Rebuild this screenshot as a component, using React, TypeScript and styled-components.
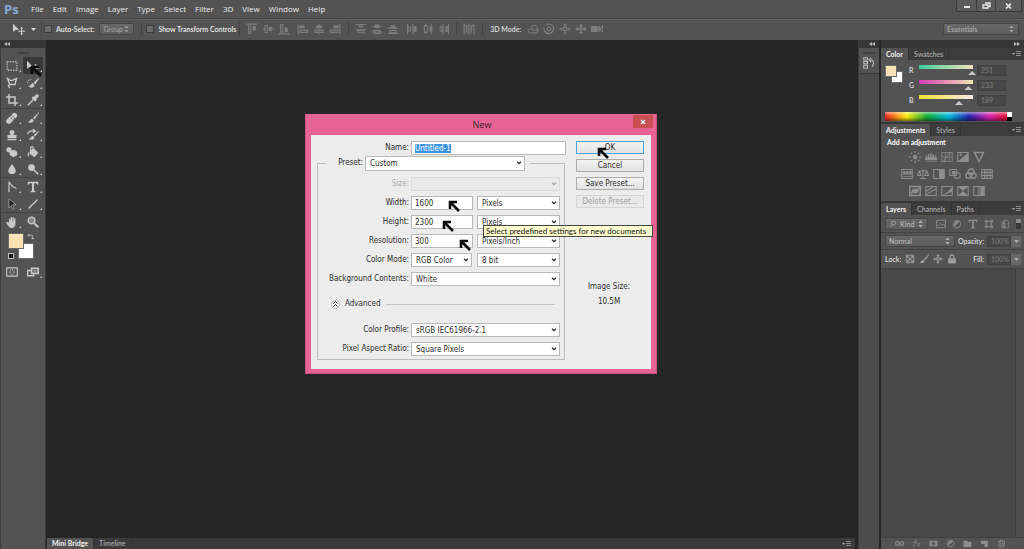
import React from "react";
import styled, { createGlobalStyle, css } from "styled-components";

const Global = createGlobalStyle`
  *, *::before, *::after { box-sizing: border-box; }
  html, body, #root { height: 100%; margin: 0; }
  body {
    background: #262626;
    font-family: Lato, "Open Sans", sans-serif;
    font-size: 7px;
    line-height: 12px;
    color: #dcdcdc;
    overflow: hidden;
  }
  button, input, select { font: inherit; color: inherit; margin: 0; padding: 0; border: 0; border-radius: 0; outline: 0; background: none; }
  select { appearance: none; opacity: 1; }
  fieldset { margin: 0; padding: 0; border: 0; min-width: 0; }
  svg { display: block; flex: none; }
`;

/* ---------- icons ---------- */

const Svg = ({ s = 12, children }: { s?: number; children: React.ReactNode }) => (
  <svg width={s} height={s} viewBox="0 0 16 16" fill="none" stroke="currentColor" strokeWidth={1.4} aria-hidden="true">
    {children}
  </svg>
);
const F = { fill: "currentColor", stroke: "none" };

const icons: Record<string, React.ReactNode> = {
  marquee: <rect x="1.5" y="2.5" width="13" height="11" strokeDasharray="2 1.4" />,
  move: (
    <>
      <path {...F} d="M0 1v11l3-2.600L8 9z" />
      <path d="M11.500 6.500v9M7 11h9" />
      <path {...F} d="M11.500 5l2 2.500h-4zM11.500 16l2-2h-4z" />
    </>
  ),
  lasso: <path strokeWidth="1.800" d="M2 2l5 3 7-3-2 8H5L2 2zM5 10l-2 2 2 3" />,
  quick: (
    <>
      <path {...F} d="M16 1L9 7l2 3 5-8zM8 8c-3 0-2 4-6 4 3 4 8 2 8-1z" />
      <path strokeDasharray="1.500 1.500" d="M1 8c0-4 3-5 6-4" />
    </>
  ),
  crop: <path strokeWidth="2" d="M4 0v12h12M0 4h12v12" />,
  dropper: (
    <>
      <path {...F} d="M9 4l3-3c2-2 5 1 3 3l-3 3 1 1-2 2-5-5 2-2z" />
      <path strokeWidth="2" d="M9 7l-6 6-2 2" />
    </>
  ),
  heal: (
    <>
      <path {...F} d="M1 10l8-8c3-3 8 2 5 5l-8 8c-3 3-8-2-5-5z" />
      <path stroke="#535353" strokeDasharray="1.400 1.400" d="M5 6l5 5M7 4l5 5" />
    </>
  ),
  brush: <path {...F} d="M16 0L8 8l2 2 6-9zM7 9c-3 0-2 4-6 4 3 3 8 1 8-2z" />,
  stamp: <path {...F} d="M6 8c0-2-2-3-1-5s5-2 6 0-1 3-1 5h4v4H2V8zM2 13h12v2H2z" />,
  history: (
    <>
      <path {...F} d="M16 2L9 8l2 2 5-7zM8 9c-3 0-2 4-6 4 3 3 8 1 8-2z" />
      <path strokeWidth="1.800" d="M1 7c1-4 5-5 9-4M8 0l3 3-3 2" />
    </>
  ),
  eraser: (
    <>
      <path {...F} d="M5 7l6-2 4 3v4l-5 3-5-3z" />
      <circle {...F} cx="4" cy="5" r="3.500" />
    </>
  ),
  bucket: (
    <>
      <path {...F} d="M4 6l5-3 6 6-5 6-7-5zM2 8c-3 5 0 7 1 5z" />
      <path d="M5 8V1h3v4" />
    </>
  ),
  drop: <path {...F} d="M8 1C6 5 3 7 3 11c0 5 10 5 10 0 0-4-3-6-5-10z" />,
  dodge: (
    <>
      <circle {...F} cx="6" cy="6" r="4.500" />
      <path strokeWidth="2" d="M9 9l6 6" />
    </>
  ),
  pen: <path strokeWidth="1.600" d="M4 15V1c2 4 5 7 10 9" />,
  type: <path {...F} d="M1 1h14v4h-1.500l-1-2H9.400v10l1.800.7V15H4.800v-1.300l1.800-.7V3H3.500l-1 2H1z" />,
  select: <path fill="#1c1c1c" stroke="currentColor" strokeWidth=".8" d="M4 1v12l3-3 2 5 2-1-2-5h4z" />,
  line: <path strokeWidth="1.600" d="M2 14L14 2" />,
  hand: <path {...F} d="M4 9V4c0-1 1.500-1 1.700 0l.5 3V2c0-1 1.700-1 1.800 0v5h.6V2c0-1 1.700-1 1.700 0v5.500l.7-4c.2-1 1.600-1 1.600 0V10c0 4-2 6-5 6s-4-2-7.500-7c0-1 2-1.500 3.900 0z" />,
  zoom: (
    <>
      <circle fill="#8a8a8a" strokeWidth="1.800" cx="6" cy="6" r="4.500" />
      <path strokeWidth="2.600" d="M9.500 9.500L15 15" />
    </>
  ),
  mask: (
    <>
      <path d="M1 2.500h14v11H1z" />
      <circle cx="8" cy="8" r="3" strokeDasharray="1.500 1" />
    </>
  ),
  screens: (
    <>
      <path strokeWidth="1.800" d="M1 6h8v7H1z" />
      <path {...F} d="M5 2h11v9H5z" />
      <path stroke="#535353" d="M8 5h5v3H8z" />
    </>
  ),
  swap: <path strokeWidth="2" d="M2 5h8c2 0 3 1 3 3v6M5 2L2 5l3 3M10 11l3 3 3-3" />,
  alignTop: (
    <>
      <path d="M1 1.500h14M3.500 4h3v10h-3z" />
      <path {...F} d="M9 4h4v6H9z" />
    </>
  ),
  alignMidV: (
    <>
      <path d="M1 8h3M7 8h2M12 8h3M4 3.500h3v9H4z" />
      <path {...F} d="M9 5h4v6H9z" />
    </>
  ),
  alignBot: (
    <>
      <path d="M1 14.500h14M3.500 2h3v10h-3z" />
      <path {...F} d="M9 6h4v6H9z" />
    </>
  ),
  alignLeft: (
    <>
      <path d="M1.500 1v14M4 9.500h10v3H4z" />
      <path {...F} d="M3 3h7v4H3z" />
    </>
  ),
  alignMidH: (
    <>
      <path d="M8 1v14M2.500 9.500h11v3h-11z" />
      <path {...F} d="M4 3h8v4H4z" />
    </>
  ),
  alignRight: (
    <>
      <path d="M14.500 1v14M2 9.500h10v3H2z" />
      <path {...F} d="M6 3h7v4H6z" />
    </>
  ),
  distTop: (
    <>
      <path d="M1 2h14M1 9h14M4 10h8v3H4z" />
      <path {...F} d="M5 3h6v3H5z" />
    </>
  ),
  distMid: (
    <>
      <path d="M1 5h14M1 12h14M4 10h8v4H4z" />
      <path {...F} d="M5 2h6v5H5z" />
    </>
  ),
  distBot: (
    <>
      <path d="M1 7h14M1 14h14M4 10h8v3H4z" />
      <path {...F} d="M5 3h6v4H5z" />
    </>
  ),
  distLeft: (
    <>
      <path d="M2 1v14M9 1v14M3 5h3v6H3z" />
      <path {...F} d="M10 4h4v8h-4z" />
    </>
  ),
  distCen: (
    <>
      <path d="M5 1v2M5 13v2M12 1v14M3 3.500h4v9H3z" />
      <path {...F} d="M10 5h4v6h-4z" />
    </>
  ),
  distRight: (
    <>
      <path d="M7 1v14M14 1v14M3 5h3v6H3z" />
      <path {...F} d="M10 4h3v8h-3z" />
    </>
  ),
  auto: <path strokeWidth="1.600" d="M1.500 1v14M5 3v11M8 1v14M11 3v11M14.500 1v14M2 3.500h3M11 3.500h3" />,
  orbit: <path d="M13 5c-3-4-9-1-6 3 2 3 6 2 7-1 2 4-2 7-5 6-4 1-8 0-7-3 0-2 3-2 4-1" />,
  roll: (
    <>
      <path d="M4 3c5-4 11 0 10 6-2 6-10 7-12 1l-1-4" />
      <circle cx="8" cy="8" r="2.500" />
    </>
  ),
  pan: (
    <>
      <path {...F} d="M8 0L5.500 3.500h5zM8 16l-2.500-3.500h5zM0 8l3.500-2.500v5zM16 8l-3.500-2.500v5z" />
      <path d="M8 3v3M8 10v3M3 8h3M10 8h3M6 6h4v4H6z" />
    </>
  ),
  slide: <path {...F} d="M8 1l3 3-2 1v2h3V5l4 3-4 3V9H9v3h2l-3 3-3-3h2V9H4v2L0 8l4-3v2h3V5L5 4z" />,
  camera: (
    <>
      <path {...F} d="M0 4h9v8H0z" />
      <path d="M9 8l2-3v6zM12 8l3.500-4v8z" />
    </>
  ),
  panelHistory: <path d="M1 1h5v3H1zM1 6h5v3H1zM1 11h5v4H1zM9 4h3c3 2 2 6 0 9M11 1L8 4l3 3" />,
  sun: (
    <>
      <circle {...F} cx="8" cy="8" r="3" />
      <path d="M8 0v3M8 13v3M0 8h3M13 8h3M2.500 2.500l2 2M11.500 11.500l2 2M13.500 2.500l-2 2M4.500 11.500l-2 2" />
    </>
  ),
  levels: <path {...F} d="M0 12V9h1V6h2v3h1V4h2v4h1V3h2v5h1V5h2v4h1V6h2v3h1v3zM0 13h16v1H0z" />,
  curves: <path d="M1 2h14v12H1zM1 14C8 13 7 3 15 2M6 2v12M11 2v12M1 8h14" strokeWidth="1" />,
  exposure: (
    <>
      <path d="M1 2h14v12H1z" />
      <path {...F} d="M1 14L15 2v12z" />
      <path d="M3 5h4M5 3v4" />
    </>
  ),
  vibrance: <path strokeWidth="2" d="M2 2h12L8 14z" />,
  hue: (
    <>
      <path d="M1 2h14v12H1z" />
      <path {...F} d="M3 4h3v5H3zM7 4h3v5H7zM11 4h3v5h-3zM3 11h11v1H3z" />
    </>
  ),
  balance: <path d="M8 1v13M4 14h8M2 4h12M3 4l-2.500 6h5zM13 4l-2.500 6h5z" />,
  bw: (
    <>
      <path d="M1 2h14v12H1z" />
      <path {...F} d="M8 2h7v12H8z" />
    </>
  ),
  photo: (
    <>
      <path d="M1 2h9v8H1z" />
      <circle cx="11" cy="10" r="4" />
      <circle {...F} cx="6" cy="6" r="2.500" />
    </>
  ),
  mixer: (
    <>
      <circle cx="8" cy="5" r="3.800" strokeWidth="2" />
      <circle cx="5" cy="10" r="3.800" strokeWidth="2" />
      <circle cx="11" cy="10" r="3.800" strokeWidth="2" />
    </>
  ),
  lookup: <path d="M1 2h14v12H1zM1 6h14M1 10h14M5 2v12M8 2v12M12 2v12" />,
  invert: (
    <>
      <path strokeWidth="2" d="M1 2h14v12H1z" />
      <path {...F} d="M1 14l4-9h6L15 2l-4 9H5z" />
    </>
  ),
  poster: <path d="M1 2h14v12H1zM1 13l14-8M1 9l9-6" />,
  threshold: (
    <>
      <path d="M1 2h14v12H1z" />
      <path {...F} d="M1 14l7-4 7-7v6l-7 3z" />
    </>
  ),
  selective: (
    <>
      <path d="M1 2h14v12H1z" />
      <path {...F} d="M1 2l7 6 7-6zM1 14l7-6 7 6z" />
    </>
  ),
  gradMap: (
    <>
      <path d="M1 2h14v12H1z" />
      <path {...F} opacity=".5" d="M6 2h4v12H6z" />
      <path {...F} d="M10 2h5v12h-5z" />
    </>
  ),
  image: <path d="M1 2h14v12H1zM3 11l4-4 3 3 2-2 2 3" />,
  half: (
    <>
      <circle cx="8" cy="8" r="6" />
      <path {...F} d="M4 12A6 6 0 0 1 12 4z" />
    </>
  ),
  shape: <path d="M4 4h8v8H4zM2 2h3v3H2zM11 2h3v3h-3zM2 11h3v3H2zM11 11h3v3h-3z" />,
  smart: <path d="M6 2h5l3 3v9H6zM3 6h5v8H3z" />,
  pixels: (
    <>
      <path d="M2 2h12v12H2z" />
      <path {...F} d="M3 3h3v3H3zM10 3h3v3h-3zM6 6h4v4H6zM3 10h3v3H3zM10 10h3v3h-3z" />
    </>
  ),
  lock: (
    <>
      <path {...F} d="M2 7h12v8H2z" />
      <path strokeWidth="2" d="M5 7V3c1-2 5-2 6 0v4" />
    </>
  ),
  link: <path strokeWidth="2" d="M8 8C5 3 1 4 1 8s4 5 7 0 7-4 7 0-4 5-7 0" />,
  fx: <path d="M9 2C6 0 6 5 5 9s-2 6-4 4M3 6h6M9 7l5 6M14 7l-5 6" />,
  addMask: <path {...F} fillRule="evenodd" d="M1 3h14v10H1zM11 8a3 3 0 1 0-6 0 3 3 0 0 0 6 0z" />,
  folder: <path {...F} d="M1 3h6l1 2h7v9H1z" />,
  page: <path {...F} d="M2 3h12v11H8V9H2z" />,
  trash: <path d="M2 4h12M6 4V2h4v2M3 4l1 10h8l1-10M6 6v6M10 6v6" />,
  search: (
    <>
      <circle cx="9" cy="6" r="4" />
      <path d="M6 9l-4 5" />
    </>
  ),
};

const Icon = ({ name, s }: { name: string; s?: number }) => <Svg s={s}>{icons[name]}</Svg>;

const Pointer = () => (
  <svg width="13" height="13" viewBox="0 0 13 13" aria-hidden="true">
    <path d="M2 9V2h7M2 2l9 9" fill="none" stroke="#0a0a0a" strokeWidth="2.600" />
  </svg>
);

const Chevron = () => (
  <svg width="6" height="4" viewBox="0 0 6 4" aria-hidden="true">
    <path d="M1 .7l2 2 2-2" fill="none" stroke="currentColor" strokeWidth="1.300" />
  </svg>
);

const Caret = () => (
  <svg width="5" height="3" viewBox="0 0 5 3" aria-hidden="true">
    <path d="M0 0h5L2.500 3z" fill="currentColor" />
  </svg>
);

const UpDown = () => (
  <svg width="5" height="8" viewBox="0 0 5 8" aria-hidden="true">
    <path d="M.5 3L2.500.5 4.500 3zM.5 5l2 2.500L4.500 5z" fill="currentColor" />
  </svg>
);

const Collapse = ({ flip }: { flip?: boolean }) => (
  <svg width="6" height="4" viewBox="0 0 6 4" aria-hidden="true">
    <path d={flip ? "M0 0l3 2-3 2zM3 0l3 2-3 2z" : "M3 0L0 2l3 2zM6 0L3 2l3 2z"} fill="#b8b8b8" />
  </svg>
);

/* ---------- frame ---------- */

const App = styled.div`
  position: relative;
  display: flex;
  flex-direction: column;
  height: 100%;
  min-height: 540px;
  background: #535353;
`;

const MenuBar = styled.header`
  display: flex;
  align-items: center;
  height: 19px;
  padding-left: 4px;
  border-bottom: 1px solid #474747;
`;

const Logo = styled.span`
  width: 27px;
  color: #84a9d6;
  font: bold 13px/16px "Open Sans", sans-serif;
`;

const Menus = styled.nav`
  display: flex;
  flex: 1;
  gap: 9px;
`;

const MenuButton = styled.button`
  font-family: "Open Sans", sans-serif;
  font-size: 8px;
  line-height: 14px;
  color: #ececec;
`;

const WindowButtons = styled.div`
  display: flex;
  align-self: flex-start;
  margin-right: 2px;
  border: 1px solid #3a3a3a;
  border-top: 0;
`;

const WindowButton = styled.button<{ $w: number }>`
  display: grid;
  place-items: center;
  width: ${(p) => p.$w}px;
  height: 11px;
  color: #e8e8e8;
  background: #5b5b5b;
  & + & { border-left: 1px solid #3a3a3a; }
`;

const OptionsBar = styled.div`
  display: flex;
  align-items: center;
  height: 21px;
  padding: 0 5px 2px 13px;
  border-top: 1px solid #5e5e5e;
  font-weight: 600;
`;

const Group = styled.div<{ $gap?: number; $ml?: number }>`
  display: flex;
  align-items: center;
  gap: ${(p) => p.$gap ?? 4}px;
  margin-left: ${(p) => p.$ml ?? 0}px;
`;

const Rule = styled.span<{ $ml?: number; $mr?: number }>`
  width: 1px;
  height: 14px;
  margin: 0 ${(p) => p.$mr ?? 5}px 0 ${(p) => p.$ml ?? 5}px;
  background: #444;
`;

const IconButton = styled.button<{ $tone?: string }>`
  display: grid;
  place-items: center;
  color: ${(p) => p.$tone ?? "#7d7d7d"};
`;

const Check = styled.label`
  display: flex;
  align-items: center;
  gap: 4px;
  white-space: nowrap;
  color: #ececec;
  input {
    appearance: none;
    width: 8px;
    height: 8px;
    background: #6b6b6b;
    border: 1px solid #3f3f3f;
  }
`;

const DarkSelectBox = styled.span<{ $w: number; $tone?: string }>`
  display: flex;
  align-items: center;
  width: ${(p) => p.$w}px;
  height: 12px;
  padding-right: 4px;
  color: ${(p) => p.$tone ?? "#cfcfcf"};
  background: linear-gradient(#686868, #5c5c5c);
  border: 1px solid #474747;
  border-radius: 1px;
  select { flex: 1; min-width: 0; padding-left: 3px; height: 10px; line-height: 10px; }
`;

const Spacer = styled.span`
  flex: 1;
`;

const Workspace = styled.div`
  display: flex;
  flex: 1;
  min-height: 0;
  background: #262626;
`;

const Strip = styled.div<{ $end?: boolean }>`
  display: flex;
  flex: none;
  align-items: center;
  justify-content: ${(p) => (p.$end ? "flex-end" : "flex-start")};
  height: 8px;
  padding: 0 4px 0 3px;
  background: #363636;
`;

const Grip = styled.span`
  align-self: center;
  flex: none;
  width: 12px;
  height: 2px;
  margin-top: 4px;
  background: #404040;
`;

/* ---------- tools ---------- */

const ToolColumn = styled.aside`
  display: flex;
  flex-direction: column;
  width: 46px;
  background: #535353;
  border-right: 1px solid #3a3a3a;
  border-left: 1px solid #3a3a3a;
`;

const ToolStack = styled.div`
  margin-top: 3px;
`;

const ToolGroup = styled.div`
  display: grid;
  grid-template-columns: 20px 20px;
  grid-auto-rows: 17px;
  column-gap: 1px;
  margin: 0 2px 0 1px;
  & + & { border-top: 1px solid #444; }
`;

const Tool = styled.button<{ $on?: boolean; $flat?: boolean }>`
  position: relative;
  display: grid;
  place-items: center;
  color: #c9c9c9;
  ${(p) => p.$on && css`background: #383838; border-radius: 2px;`}
  ${(p) =>
    !p.$flat &&
    css`
      &::after {
        content: "";
        position: absolute;
        right: 1px;
        bottom: 2px;
        border: 1px solid transparent;
        border-right-color: #c9c9c9;
        border-bottom-color: #c9c9c9;
      }
    `}
`;

const SwatchPair = styled.div<{ $w: number; $s: number }>`
  position: relative;
  flex: none;
  width: ${(p) => p.$w}px;
  height: ${(p) => p.$w}px;
  span {
    position: absolute;
    width: ${(p) => p.$s}px;
    height: ${(p) => p.$s}px;
    border: 1px solid #6b6b6b;
  }
  span:nth-of-type(1) { right: 0; bottom: 0; background: #fff; }
  span:nth-of-type(2) { left: 0; top: 0; background: #fbe3b5; }
`;

const ColorTools = styled.div`
  display: flex;
  align-items: flex-start;
  height: 30px;
  margin: 3px 0 0 7px;
  color: #c4c4c4;
`;

const SwapButton = styled.button`
  margin-left: -7px;
`;

const DefaultColors = styled.button`
  position: absolute;
  left: 0;
  bottom: 0;
  width: 6px;
  height: 6px;
  background: #1c1c1c;
  border: 1px solid #bbb;
`;

/* ---------- canvas ---------- */

const Canvas = styled.main`
  display: flex;
  flex: 1;
  flex-direction: column;
  justify-content: flex-end;
  margin: 0 3px 0 1px;
`;

const BottomTabs = styled.div`
  display: flex;
  align-items: center;
  height: 11px;
  padding-right: 4px;
  background: #3a3a3a;
`;

/* ---------- panels ---------- */

const Dock = styled.aside`
  display: flex;
  flex-direction: column;
  width: 21px;
  margin-right: 2px;
  background: #4c4c4c;
  border-left: 1px solid #3c3c3c;
`;

const DockBox = styled.div`
  display: flex;
  flex-direction: column;
  align-items: center;
  gap: 3px;
  height: 26px;
  background: #535353;
  border-bottom: 1px solid #3a3a3a;
`;

const Panels = styled.aside`
  display: flex;
  flex-direction: column;
  width: 143px;
  background: #383838;
`;

const Panel = styled.section<{ $h?: number }>`
  display: flex;
  flex-direction: column;
  flex: ${(p) => (p.$h ? "none" : "1")};
  height: ${(p) => (p.$h ? p.$h + "px" : "auto")};
  margin-bottom: ${(p) => (p.$h ? 2 : 0)}px;
  background: #535353;
`;

const Tabs = styled.div`
  display: flex;
  flex: none;
  align-items: center;
  height: 12px;
  padding-right: 3px;
  background: #3c3c3c;
`;

const Tab = styled.button<{ $on?: boolean }>`
  height: 100%;
  padding: 0 5px;
  font-weight: ${(p) => (p.$on ? 700 : 600)};
  line-height: 11px;
  color: ${(p) => (p.$on ? "#f2f2f2" : "#a8a8a8")};
  background: ${(p) => (p.$on ? "#535353" : "transparent")};
  border-right: 1px solid #333;
`;

const FlyoutIcon = () => (
  <svg width="9" height="6" viewBox="0 0 9 6" aria-hidden="true">
    <path d="M0 2h3L1.500 4z" fill="#aaa" />
    <path d="M4 .5h5M4 2.500h5M4 4.500h5" stroke="#8c8c8c" />
  </svg>
);

const ColorBody = styled.div`
  display: flex;
  gap: 6px;
  height: 52px;
  padding: 5px 0 0 4px;
`;

const Channels = styled.div`
  display: flex;
  flex-direction: column;
  gap: 5px;
`;

const Channel = styled.label`
  display: flex;
  align-items: center;
  height: 10px;
  font-weight: 600;
  line-height: 10px;
  > span { width: 6px; }
`;

const Range = styled.input<{ $from: string; $to: string }>`
  appearance: none;
  width: 62px;
  height: 10px;
  background: linear-gradient(90deg, ${(p) => p.$from}, ${(p) => p.$to}) center top / 54px 4px no-repeat;
  &::-webkit-slider-thumb {
    appearance: none;
    width: 8px;
    height: 4px;
    margin-top: 6px;
    background: #c8c8c8;
    clip-path: polygon(50% 0, 100% 100%, 0 100%);
  }
`;

const DimInput = styled.input<{ $w: number }>`
  width: ${(p) => p.$w}px;
  height: 11px;
  padding-left: 3px;
  color: #757575;
  background: #474747;
  border: 1px solid #404040;
`;

const Spectrum = styled.div`
  display: flex;
  height: 9px;
  margin: 0 12px 0 4px;
  background:
    linear-gradient(rgba(255, 255, 255, 0.5), transparent 45%, transparent 55%, rgba(0, 0, 0, 0.5)),
    linear-gradient(90deg, #e22, #fe1 17%, #1a3 33%, #0bd 50%, #22a 66%, #d2a 83%, #d12 97%);
  &::after {
    content: "";
    width: 5px;
    margin-left: auto;
    background: linear-gradient(#fff 50%, #000 50%);
  }
`;

const PanelTitle = styled.h2`
  margin: 1px 0 2px 6px;
  font-size: 7px;
  font-weight: 700;
  line-height: 11px;
  color: #fff;
`;

const AdjustRows = styled.div`
  display: flex;
  flex: 1;
  flex-direction: column;
  margin-top: -2px;
`;

const AdjustRow = styled.div`
  display: flex;
  justify-content: center;
  height: 17px;
  padding-right: 12px;
`;

const LayerRow = styled.div<{ $h: number }>`
  display: flex;
  flex: none;
  align-items: center;
  height: ${(p) => p.$h}px;
  padding: 0 3px 0 4px;
  border-bottom: 1px solid #424242;
  font-weight: 600;
`;

const LayerList = styled.div`
  flex: 1;
  margin-right: 8px;
  background: #484848;
  border-right: 1px solid #3c3c3c;
`;

const LayerWell = styled.div`
  display: flex;
  flex: 1;
  background: #4e4e4e;
`;

const Footer = styled.footer`
  display: flex;
  flex: none;
  align-items: center;
  justify-content: center;
  height: 12px;
  padding-right: 5px;
  border-top: 1px solid #424242;
`;

const Stepper = styled.button`
  display: grid;
  place-items: center;
  width: 10px;
  height: 11px;
  color: #aaa;
  background: #666;
`;

const Toggle = styled.span`
  width: 5px;
  height: 10px;
  margin-left: auto;
  background: linear-gradient(#888 40%, #3a3a3a 40%);
`;

/* ---------- dialog ---------- */

const Dialog = styled.section`
  position: absolute;
  left: calc(50% - 207px);
  top: 114px;
  width: 352px;
  padding: 0 5px 4px;
  background: #e66493;
  border: 1px solid #c9537e;
  border-top: 0;
  color: #2c2c2c;
  font-family: "DejaVu Sans Condensed", "DejaVu Sans", sans-serif;
  font-size: 8px;
`;

const TitleBar = styled.header`
  display: grid;
  grid-template-columns: 20px 1fr 20px;
  align-items: start;
  height: 21px;
  margin-right: -2px;
  h1 {
    margin: 0;
    font-family: "Open Sans", sans-serif;
    font-size: 9px;
    font-weight: 400;
    line-height: 21px;
    text-align: center;
    color: #3a2530;
  }
`;

const CloseButton = styled.button`
  display: grid;
  place-items: center;
  grid-column: 3;
  height: 13px;
  margin-top: 1px;
  background: #c94f55;
`;

const DialogBody = styled.form`
  display: flex;
  height: 234px;
  padding: 6px 7px 0 6px;
  background: #ececec;
`;

const FormColumn = styled.div`
  display: flex;
  flex-direction: column;
  gap: 1px;
  width: 249px;
`;

const Row = styled.div<{ $label?: number; $off?: boolean }>`
  display: flex;
  align-items: center;
  gap: 2px;
  height: 14px;
  opacity: ${(p) => (p.$off ? 0.35 : 1)};
  > label {
    flex: none;
    width: ${(p) => p.$label ?? 91}px;
    height: 14px;
    line-height: 14px;
    text-align: right;
    white-space: nowrap;
  }
`;

const fieldLook = css`
  height: 14px;
  background: #fff;
  border: 1px solid #b9b9b9;
`;

const TextInput = styled.input<{ $w: number }>`
  ${fieldLook}
  width: ${(p) => p.$w}px;
  padding-left: 3px;
  &::selection { color: #fff; background: #3b94e6; }
`;

const SelectShell = styled.span<{ $w: number; $h?: number; $off?: boolean }>`
  ${fieldLook}
  display: flex;
  align-items: center;
  width: ${(p) => p.$w}px;
  height: ${(p) => p.$h ?? 14}px;
  padding-right: 2px;
  background: ${(p) => (p.$off ? "#e4e4e4" : "#fff")};
  select { flex: 1; min-width: 0; padding: 1px 0 0 4px; height: 13px; line-height: 12px; }
`;

const PresetBox = styled.fieldset`
  width: 248px;
  height: 204px;
  padding: 7px 4px 0 0;
  border: 1px solid #bdbdbd;
`;

const PresetLegend = styled.legend`
  margin-left: 8px;
  padding: 0 5px 0 0;
`;

const FieldStack = styled.div`
  display: flex;
  flex-direction: column;
  gap: 5px;
`;

const Advanced = styled.div`
  display: flex;
  align-items: center;
  gap: 5px;
  height: 14px;
  margin: 11px 5px 12px 13px;
  &::after {
    content: "";
    flex: 1;
    height: 1px;
    background: #c2c2c2;
  }
`;

const RoundButton = styled.button`
  display: grid;
  place-items: center;
  width: 9px;
  height: 9px;
  border: 1px solid #b5b5b5;
  border-radius: 50%;
  background: #fafafa;
`;

const SideColumn = styled.div`
  display: flex;
  flex-direction: column;
  align-items: stretch;
  gap: 5px;
  width: 69px;
  margin-left: 10px;
`;

const PushButton = styled.button<{ $main?: boolean }>`
  height: 13px;
  line-height: 11px;
  background: linear-gradient(#f3f3f3, #e2e2e2);
  border: 1px solid ${(p) => (p.$main ? "#4ba3d9" : "#adadad")};
  &:disabled { color: #a3a3a3; border-color: #d5d5d5; background: #e9e9e9; }
`;

const SizeInfo = styled.div`
  margin-top: 66px;
  padding-right: 2px;
  line-height: 15px;
  text-align: center;
`;

const Tip = styled.div`
  position: absolute;
  left: 177px;
  top: 111px;
  width: 170px;
  height: 12px;
  padding-left: 2px;
  color: #111;
  background: #ffffcf;
  border: 1px solid #444;
  font-family: Lato, sans-serif;
  line-height: 10px;
  white-space: nowrap;
`;

const PointerMark = styled.span<{ $x: number; $y: number }>`
  position: absolute;
  left: ${(p) => p.$x}px;
  top: ${(p) => p.$y}px;
  pointer-events: none;
`;

/* ---------- data ---------- */

const menus = ["File", "Edit", "Image", "Layer", "Type", "Select", "Filter", "3D", "View", "Window", "Help"];
const toolGroups = [
  ["marquee", "move", "lasso", "quick", "crop", "dropper"],
  ["heal", "brush", "stamp", "history", "eraser", "bucket", "drop", "dodge"],
  ["pen", "type", "select", "line"],
  ["hand", "zoom"],
];
const adjustments = [
  ["sun", "levels", "curves", "exposure", "vibrance"],
  ["hue", "balance", "bw", "photo", "mixer", "lookup"],
  ["invert", "poster", "threshold", "selective", "gradMap"],
];
const channels = [
  { id: "R", value: 251, from: "#3fcfa0", to: "#f3e2b8" },
  { id: "G", value: 233, from: "#d43ab4", to: "#f5e6b4" },
  { id: "B", value: 189, from: "#f2e02e", to: "#f4e8e6" },
];

const Pick = ({ id, value, w, h, off }: { id: string; value: string; w: number; h?: number; off?: boolean }) => (
  <SelectShell $w={w} $h={h} $off={off}>
    <select id={id} aria-label={id} disabled={off} defaultValue={value}>
      <option>{value}</option>
    </select>
    <Chevron />
  </SelectShell>
);

const IconSet = ({ names, gap, ml, tone, s }: { names: string[]; gap?: number; ml?: number; tone?: string; s?: number }) => (
  <Group $gap={gap} $ml={ml}>
    {names.map((n) => (
      <IconButton key={n} type="button" aria-label={n} $tone={tone}>
        <Icon name={n} s={s} />
      </IconButton>
    ))}
  </Group>
);

const NewDialog = () => {
  const nameRef = React.useRef<HTMLInputElement>(null);
  React.useEffect(() => {
    nameRef.current?.focus();
    nameRef.current?.select();
  }, []);
  return (
    <Dialog role="dialog" aria-labelledby="dialog-title">
      <TitleBar>
        <span />
        <h1 id="dialog-title">New</h1>
        <CloseButton type="button" aria-label="Close">
          <svg width="6" height="6" viewBox="0 0 6 6" aria-hidden="true">
            <path d="M1 1l4 4M5 1L1 5" stroke="#fff" strokeWidth="1.300" />
          </svg>
        </CloseButton>
      </TitleBar>
      <DialogBody onSubmit={(e) => e.preventDefault()}>
        <FormColumn>
          <Row $label={92}>
            <label htmlFor="name">Name:</label>
            <TextInput id="name" ref={nameRef} $w={155} defaultValue="Untitled-1" />
          </Row>
          <PresetBox>
            <PresetLegend>
              <Row $label={37}>
                <label htmlFor="preset">Preset:</label>
                <Pick id="preset" value="Custom" w={160} h={15} />
              </Row>
            </PresetLegend>
            <FieldStack>
              <Row $off>
                <label htmlFor="size">Size:</label>
                <Pick id="size" value="" w={149} off />
              </Row>
              <Row>
                <label htmlFor="width">Width:</label>
                <TextInput id="width" $w={62} defaultValue="1600" />
                <Spacer />
                <Pick id="width-unit" value="Pixels" w={83} />
              </Row>
              <Row>
                <label htmlFor="height">Height:</label>
                <TextInput id="height" $w={62} defaultValue="2300" />
                <Spacer />
                <Pick id="height-unit" value="Pixels" w={83} />
              </Row>
              <Row>
                <label htmlFor="resolution">Resolution:</label>
                <TextInput id="resolution" $w={62} defaultValue="300" />
                <Spacer />
                <Pick id="resolution-unit" value="Pixels/Inch" w={83} />
              </Row>
              <Row>
                <label htmlFor="mode">Color Mode:</label>
                <Pick id="mode" value="RGB Color" w={61} />
                <Spacer />
                <Pick id="depth" value="8 bit" w={83} />
              </Row>
              <Row>
                <label htmlFor="background">Background Contents:</label>
                <Pick id="background" value="White" w={149} />
              </Row>
            </FieldStack>
            <Advanced>
              <RoundButton type="button" aria-label="Toggle advanced">
                <svg width="5" height="6" viewBox="0 0 5 6" aria-hidden="true">
                  <path d="M.5 2.500l2-2 2 2M.5 5.500l2-2 2 2" fill="none" stroke="#222" />
                </svg>
              </RoundButton>
              Advanced
            </Advanced>
            <FieldStack>
              <Row>
                <label htmlFor="profile">Color Profile:</label>
                <Pick id="profile" value="sRGB IEC61966-2.1" w={149} />
              </Row>
              <Row>
                <label htmlFor="aspect">Pixel Aspect Ratio:</label>
                <Pick id="aspect" value="Square Pixels" w={149} />
              </Row>
            </FieldStack>
          </PresetBox>
        </FormColumn>
        <SideColumn>
          <PushButton type="submit" $main>OK</PushButton>
          <PushButton type="button">Cancel</PushButton>
          <PushButton type="button">Save Preset...</PushButton>
          <PushButton type="button" disabled>Delete Preset...</PushButton>
          <SizeInfo>
            Image Size:
            <br />
            10.5M
          </SizeInfo>
        </SideColumn>
      </DialogBody>
      <Tip role="tooltip">Select predefined settings for new documents</Tip>
      <PointerMark $x={142} $y={86}><Pointer /></PointerMark>
      <PointerMark $x={136} $y={106}><Pointer /></PointerMark>
      <PointerMark $x={153} $y={125}><Pointer /></PointerMark>
      <PointerMark $x={291} $y={33}><Pointer /></PointerMark>
    </Dialog>
  );
};

export default function PhotoEditor() {
  return (
    <>
      <Global />
      <App>
        <MenuBar>
          <Logo>Ps</Logo>
          <Menus>
            {menus.map((m) => (
              <MenuButton key={m} type="button">{m}</MenuButton>
            ))}
          </Menus>
          <WindowButtons>
            <WindowButton $w={19} aria-label="Minimize">
              <svg width="8" height="6" aria-hidden="true"><path d="M1 4h6" stroke="currentColor" strokeWidth="2" /></svg>
            </WindowButton>
            <WindowButton $w={19} aria-label="Restore">
              <svg width="9" height="7" viewBox="0 0 9 7" aria-hidden="true">
                <path d="M3 1h5v3.500H6M1 3h5v3H1z" fill="none" stroke="currentColor" strokeWidth="1.300" />
              </svg>
            </WindowButton>
            <WindowButton $w={26} aria-label="Close window">
              <svg width="7" height="6" viewBox="0 0 7 6" aria-hidden="true">
                <path d="M1 .5l5 5M6 .5l-5 5" stroke="currentColor" strokeWidth="1.600" />
              </svg>
            </WindowButton>
          </WindowButtons>
        </MenuBar>

        <OptionsBar>
          <IconButton type="button" aria-label="Move tool" $tone="#d0d0d0"><Icon name="move" /></IconButton>
          <Group $ml={6}><Caret /></Group>
          <Rule $ml={5} $mr={2} />
          <Check><input type="checkbox" />Auto-Select:</Check>
          <Group $ml={5}>
            <DarkSelectBox $w={35} $tone="#9c9c9c">
              <select aria-label="Auto-select target"><option>Group</option></select>
              <UpDown />
            </DarkSelectBox>
          </Group>
          <Rule $ml={7} $mr={4} />
          <Check><input type="checkbox" />Show Transform Controls</Check>
          <Rule $ml={3} $mr={6} />
          <IconSet names={["alignTop", "alignMidV", "alignBot"]} />
          <IconSet ml={7} names={["alignLeft", "alignMidH", "alignRight"]} />
          <Rule $ml={7} $mr={6} />
          <IconSet names={["distTop", "distMid", "distBot"]} />
          <IconSet ml={7} names={["distLeft", "distCen", "distRight"]} />
          <Rule $ml={6} $mr={6} />
          <IconSet names={["auto"]} />
          <Rule $ml={7} $mr={7} />
          3D Mode:
          <IconSet ml={6} names={["orbit", "roll", "pan", "slide", "camera"]} />
          <Spacer />
          <DarkSelectBox $w={76} $tone="#a9a9a9">
            <select aria-label="Workspace"><option>Essentials</option></select>
            <UpDown />
          </DarkSelectBox>
        </OptionsBar>

        <Workspace>
          <ToolColumn>
            <Strip><Collapse /></Strip>
            <Grip />
            <ToolStack>
              {toolGroups.map((g, i) => (
                <ToolGroup key={i}>
                  {g.map((n) => (
                    <Tool key={n} type="button" aria-label={n} $on={n === "move"} $flat={n === "zoom"}>
                      <Icon name={n} />
                    </Tool>
                  ))}
                </ToolGroup>
              ))}
            </ToolStack>
            <ColorTools>
              <SwatchPair $w={26} $s={16}>
                <span />
                <span />
                <DefaultColors type="button" aria-label="Default colors" />
              </SwatchPair>
              <SwapButton type="button" aria-label="Swap colors"><Icon name="swap" s={7} /></SwapButton>
            </ColorTools>
            <ToolGroup>
              <Tool type="button" aria-label="Quick mask" $flat><Icon name="mask" /></Tool>
              <Tool type="button" aria-label="Screen mode"><Icon name="screens" /></Tool>
            </ToolGroup>
          </ToolColumn>

          <Canvas>
            <BottomTabs>
              <Tab type="button" $on>Mini Bridge</Tab>
              <Tab type="button">Timeline</Tab>
              <Spacer />
              <FlyoutIcon />
            </BottomTabs>
          </Canvas>

          <Dock>
            <Strip $end><Collapse /></Strip>
            <DockBox>
              <Grip />
              <IconButton type="button" aria-label="History" $tone="#bdbdbd"><Icon name="panelHistory" /></IconButton>
            </DockBox>
          </Dock>

          <Panels>
            <Strip $end><Collapse flip /></Strip>
            <Panel $h={74}>
              <Tabs>
                <Tab type="button" $on>Color</Tab>
                <Tab type="button">Swatches</Tab>
                <Spacer />
                <FlyoutIcon />
              </Tabs>
              <ColorBody>
                <SwatchPair $w={18} $s={12}><span /><span /></SwatchPair>
                <Channels>
                  {channels.map((c) => (
                    <Channel key={c.id}>
                      <span>{c.id}</span>
                      <Range type="range" min={0} max={255} defaultValue={c.value} $from={c.from} $to={c.to} />
                      <DimInput $w={29} aria-label={c.id + " value"} defaultValue={c.value} />
                    </Channel>
                  ))}
                </Channels>
              </ColorBody>
              <Spectrum />
            </Panel>
            <Panel $h={77}>
              <Tabs>
                <Tab type="button" $on>Adjustments</Tab>
                <Tab type="button">Styles</Tab>
                <Spacer />
                <FlyoutIcon />
              </Tabs>
              <PanelTitle>Add an adjustment</PanelTitle>
              <AdjustRows>
                {adjustments.map((r, i) => (
                  <AdjustRow key={i}>
                    <IconSet names={r} tone="#8d8d8d" />
                  </AdjustRow>
                ))}
              </AdjustRows>
            </Panel>
            <Panel>
              <Tabs>
                <Tab type="button" $on>Layers</Tab>
                <Tab type="button">Channels</Tab>
                <Tab type="button">Paths</Tab>
                <Spacer />
                <FlyoutIcon />
              </Tabs>
              <LayerRow $h={18}>
                <DarkSelectBox $w={43} $tone="#b5b5b5">
                  <Group $ml={3}><Icon name="search" s={8} /></Group>
                  <select aria-label="Filter layers"><option>Kind</option></select>
                  <UpDown />
                </DarkSelectBox>
                <IconSet ml={8} gap={6} s={10} names={["image", "half", "type", "shape", "smart"]} tone="#8d8d8d" />
                <Toggle />
              </LayerRow>
              <LayerRow $h={17}>
                <DarkSelectBox $w={70} $tone="#b5b5b5">
                  <select aria-label="Blend mode"><option>Normal</option></select>
                  <UpDown />
                </DarkSelectBox>
                <Spacer />
                <label htmlFor="opacity">Opacity:</label>
                <Group $gap={0} $ml={3}>
                  <DimInput id="opacity" $w={24} defaultValue="100%" />
                  <Stepper type="button" aria-label="Opacity slider"><Caret /></Stepper>
                </Group>
              </LayerRow>
              <LayerRow $h={19}>
                Lock:
                <IconSet ml={4} gap={4} s={10} names={["pixels", "brush", "pan", "lock"]} tone="#a0a0a0" />
                <Spacer />
                <label htmlFor="fill">Fill:</label>
                <Group $gap={0} $ml={3}>
                  <DimInput id="fill" $w={24} defaultValue="100%" />
                  <Stepper type="button" aria-label="Fill slider"><Caret /></Stepper>
                </Group>
              </LayerRow>
              <LayerWell><LayerList /></LayerWell>
              <Footer>
                <IconSet gap={8} s={9} names={["link", "fx", "addMask", "half", "folder", "page", "trash"]} tone="#8d8d8d" />
              </Footer>
            </Panel>
          </Panels>
        </Workspace>

        <NewDialog />
        <PointerMark $x={30} $y={65}><Pointer /></PointerMark>
      </App>
    </>
  );
}
